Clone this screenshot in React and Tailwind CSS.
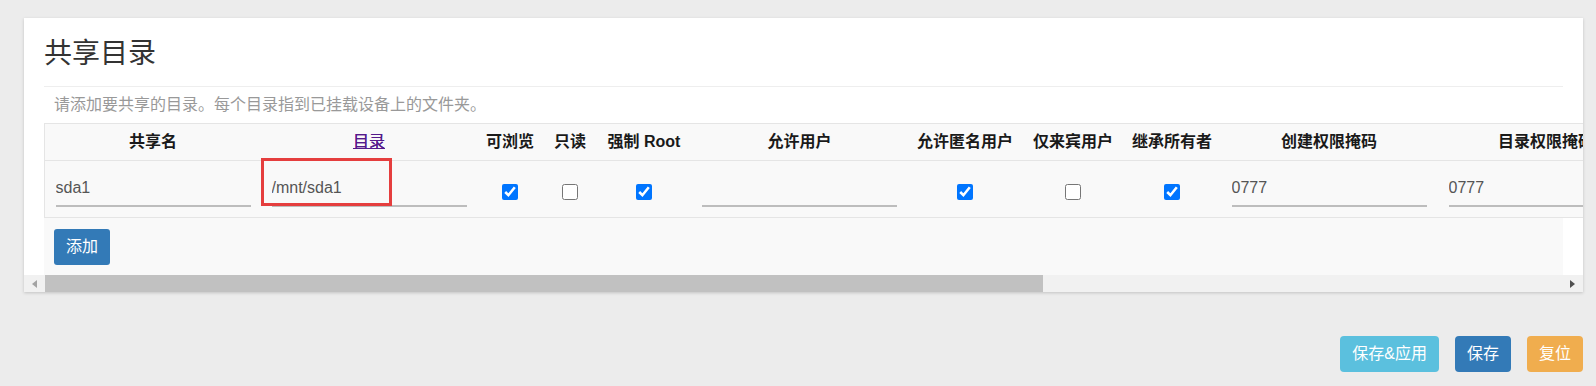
import React from "react";

const cols = [
  { w: "w-[216px]", label: "共享名", type: "text", value: "sda1" },
  { w: "w-[216px]", label: "目录", type: "text", value: "/mnt/sda1", link: true, mark: true },
  { w: "w-[66px]", label: "可浏览", type: "check", checked: true },
  { w: "w-[54px]", label: "只读", type: "check", checked: false },
  { w: "w-[94px]", label: "强制 Root", type: "check", checked: true },
  { w: "w-[217px]", label: "允许用户", type: "text", value: "" },
  { w: "w-[114px]", label: "允许匿名用户", type: "check", checked: true },
  { w: "w-[102px]", label: "仅来宾用户", type: "check", checked: false },
  { w: "w-[96px]", label: "继承所有者", type: "check", checked: true },
  { w: "w-[218px]", label: "创建权限掩码", type: "text", value: "0777" },
  { w: "w-[216px]", label: "目录权限掩码", type: "text", value: "0777" },
];

function Arrow({ dir }) {
  return (
    <svg width="5" height="8" viewBox="0 0 5 8">
      {dir === "left" ? (
        <polygon points="5,0 5,8 0,4" fill="#a3a3a3" />
      ) : (
        <polygon points="0,0 0,8 5,4" fill="#505050" />
      )}
    </svg>
  );
}

export default function App() {
  return (
    <div className="w-[1596px] h-[386px] bg-[#ececec] pt-[18px] pl-[24px] font-['Liberation_Sans','Noto_Sans_CJK_SC',sans-serif]">
      <div className="w-[1559px] bg-white shadow-[0_1px_3px_rgba(0,0,0,0.18)]">
        <div className="px-5 pt-4">
          <h2 className="text-[28px] leading-[40px] text-[#333] font-normal pb-3 border-b border-[#eeeeee]">
            共享目录
          </h2>
        </div>
        <div className="px-5">
          <div className="h-[36px] leading-[36px] pl-[10px] text-[16px] text-[#999]">
            请添加要共享的目录。每个目录指到已挂载设备上的文件夹。
          </div>
        </div>
        <div className="w-full overflow-hidden">
          <div className="pl-5 w-max">
            <div className="flex h-[38px] bg-[#f9f9f9] border-y border-l border-[#e5e5e5]">
              {cols.map((c, i) => (
                <div
                  key={i}
                  className={`${c.w} shrink-0 flex items-center justify-center text-[16px] font-bold text-[#1a1a1a] whitespace-nowrap`}
                >
                  {c.link ? (
                    <span className="text-[#551a8b] underline font-normal [text-shadow:0_0_0.4px_#551a8b]">{c.label}</span>
                  ) : (
                    c.label
                  )}
                </div>
              ))}
            </div>
            <div className="flex h-[57px] bg-[#f9f9f9] border-b border-l border-[#e5e5e5]">
              {cols.map((c, i) => (
                <div
                  key={i}
                  className={`${c.w} shrink-0 flex justify-center relative ${c.type === "check" ? "pt-[23px]" : "pt-[10px]"}`}
                >
                  {c.type === "check" ? (
                    <input
                      type="checkbox"
                      defaultChecked={c.checked}
                      className="w-4 h-4 m-0 accent-[#0075ff]"
                    />
                  ) : (
                    <input
                      type="text"
                      defaultValue={c.value}
                      className="w-[195px] h-[36px] border-b-2 border-[#bdbdbd] bg-transparent text-[16px] text-[#555] outline-none font-['Liberation_Sans',sans-serif]"
                    />
                  )}
                  {c.mark && (
                    <div className="absolute left-0 top-[-3px] w-[131px] h-[48px] border-[3px] border-[#e53e3e]" />
                  )}
                </div>
              ))}
            </div>
            <div className="w-[1519px] h-[57px] bg-[#f9f9f9] pl-[10px] pt-[11px]">
              <button className="h-[36px] px-3 rounded-[3px] bg-[#337ab7] text-white text-[16px] leading-[36px]">
                添加
              </button>
            </div>
          </div>
        </div>
        <div className="flex h-[17px] bg-[#f1f1f1] items-stretch">
          <div className="w-[21px] flex items-center justify-center">
            <Arrow dir="left" />
          </div>
          <div className="w-[998px] bg-[#c1c1c1]" />
          <div className="ml-auto w-[21px] flex items-center justify-center">
            <Arrow dir="right" />
          </div>
        </div>
      </div>
      <div className="w-[1559px] mt-[44px] flex justify-end gap-4">
        <button className="h-[36px] px-3 rounded-[4px] bg-[#5bc0de] text-white text-[16px]">
          保存&amp;应用
        </button>
        <button className="h-[36px] px-3 rounded-[4px] bg-[#337ab7] text-white text-[16px]">
          保存
        </button>
        <button className="h-[36px] px-3 rounded-[4px] bg-[#f0ad4e] text-white text-[16px]">
          复位
        </button>
      </div>
    </div>
  );
}
